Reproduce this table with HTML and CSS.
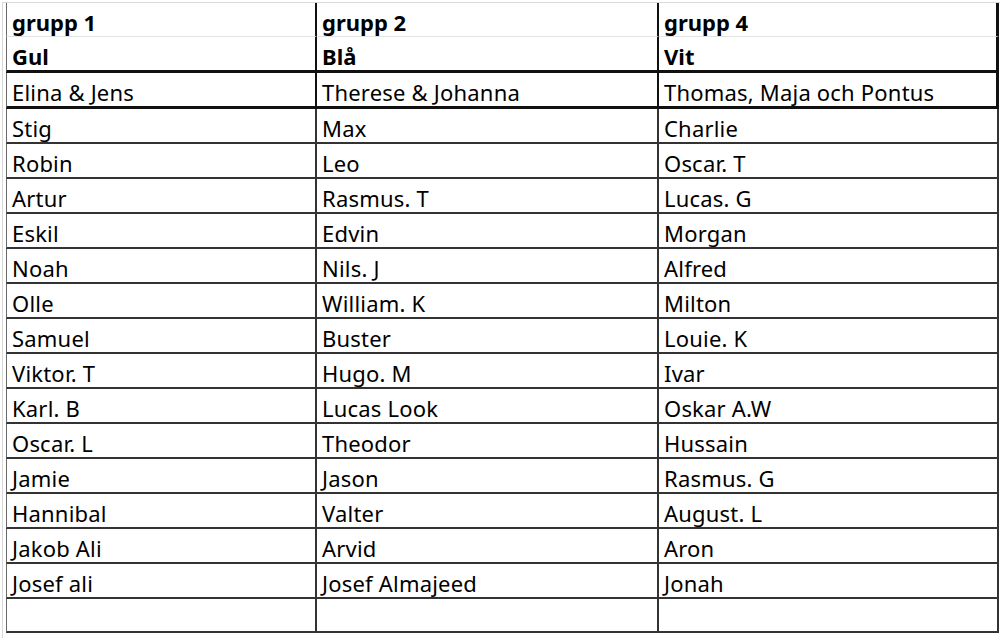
FILE: index.html
```html
<!DOCTYPE html>
<html lang="sv">
<head>
<meta charset="utf-8">
<title>Grupper</title>
<link rel="stylesheet" href="styles.css">
</head>
<body>
<div class="sheet">
  <div class="grid">
    <div class="cell head first">grupp 1</div><div class="cell head">grupp 2</div><div class="cell head last">grupp 4</div>
    <div class="cell color first">Gul</div><div class="cell color">Blå</div><div class="cell color last">Vit</div>
    <div class="cell lead first">Elina &amp; Jens</div><div class="cell lead">Therese &amp; Johanna</div><div class="cell lead last">Thomas, Maja och Pontus</div>
    <div class="cell first">Stig</div><div class="cell">Max</div><div class="cell last">Charlie</div>
    <div class="cell first">Robin</div><div class="cell">Leo</div><div class="cell last">Oscar. T</div>
    <div class="cell first">Artur</div><div class="cell">Rasmus. T</div><div class="cell last">Lucas. G</div>
    <div class="cell first">Eskil</div><div class="cell">Edvin</div><div class="cell last">Morgan</div>
    <div class="cell first">Noah</div><div class="cell">Nils. J</div><div class="cell last">Alfred</div>
    <div class="cell first">Olle</div><div class="cell">William. K</div><div class="cell last">Milton</div>
    <div class="cell first">Samuel</div><div class="cell">Buster</div><div class="cell last">Louie. K</div>
    <div class="cell first">Viktor. T</div><div class="cell">Hugo. M</div><div class="cell last">Ivar</div>
    <div class="cell first">Karl. B</div><div class="cell">Lucas Look</div><div class="cell last">Oskar A.W</div>
    <div class="cell first">Oscar. L</div><div class="cell">Theodor</div><div class="cell last">Hussain</div>
    <div class="cell first">Jamie</div><div class="cell">Jason</div><div class="cell last">Rasmus. G</div>
    <div class="cell first">Hannibal</div><div class="cell">Valter</div><div class="cell last">August. L</div>
    <div class="cell first">Jakob Ali</div><div class="cell">Arvid</div><div class="cell last">Aron</div>
    <div class="cell first">Josef ali</div><div class="cell">Josef Almajeed</div><div class="cell last">Jonah</div>
    <div class="cell first end"></div><div class="cell end"></div><div class="cell last end"></div>
  </div>
</div>
</body>
</html>
```

FILE: styles.css
```css
html, body {
  margin: 0;
  padding: 0;
  background: #ffffff;
}

.sheet {
  margin: 2px 0 0 2px;
  border-top: 1px solid #d9d9d9;
  border-left: 1px solid #d9d9d9;
  padding-left: 3px;
  height: 636px;
  box-sizing: border-box;
}

.grid {
  display: grid;
  grid-template-columns: 311px 342px 340px;
  font-family: "Noto Sans", "Open Sans", sans-serif;
  font-size: 22px;
  letter-spacing: 0.2px;
  color: #000000;
}

.cell {
  box-sizing: border-box;
  height: 35px;
  padding: 0 0 0 5px;
  display: flex;
  align-items: flex-end;
  white-space: nowrap;
  border-right: 2px solid #333333;
  border-bottom: 2px solid #333333;
  line-height: 28px;
}

.cell.first {
  border-left: 1px solid #6a6a6a;
}

.cell.head {
  height: 34px;
  font-weight: 700;
  letter-spacing: 0;
  border-bottom: 1px solid #e2e2e2;
  border-right: 2px solid #111111;
}

.cell.color {
  height: 36px;
  font-weight: 700;
  letter-spacing: 0;
  border-bottom: 3px solid #111111;
  border-right: 2px solid #111111;
}

.cell.lead {
  height: 36px;
  border-bottom: 3px solid #111111;
  border-right: 2px solid #111111;
}

.cell.head.last,
.cell.color.last,
.cell.lead.last {
  border-right: 3px solid #111111;
}

.cell.end {
  height: 34px;
}
```
